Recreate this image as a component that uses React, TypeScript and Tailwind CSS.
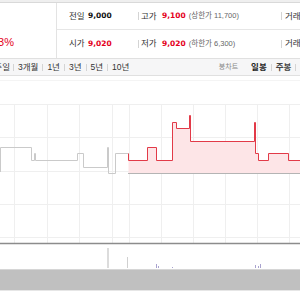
import React from 'react';

// Stock quote header + intraday chart (cropped view)

const FONT = "'Liberation Sans', 'Noto Sans CJK KR', sans-serif";
const NUM = "'DejaVu Sans', 'Noto Sans CJK KR', sans-serif";

const V_GRID = [14, 47, 79, 112, 129, 161, 193, 225, 257, 289];
const H_GRID = [104, 137, 171, 204, 237];

const GRAY_LINE =
  'M0.5,172 V147.5 H31.5 V160.5 H34.5 V153.5 H35.5 V160.5 H77.5 V153.5 H83.5 V167.5 H107.5 V147.5 H108.5 V173.5 H115.5 V153.5 H128.5';
const RED_LINE =
  'M128.5,153.5 V160.5 H147.5 V147.5 H156.5 V160.5 H172.5 V122.5 H176.5 V128.5 H189.5 V115.5 H190.5 V141.5 H254.5 V122.5 H255.5 V153.5 H258.5 V160.5 H268.5 V153.5 H288.5 V160.5 H300';

const VOLUME = [
  { x: 107, y: 248, w: 2, c: '#dcdcdc' },
  { x: 127, y: 257, w: 1, c: '#d0d0d0' },
  { x: 156, y: 264, w: 1, c: '#a9a3cf' },
  { x: 158, y: 266, w: 1, c: '#a9a3cf' },
  { x: 172, y: 267, w: 1, c: '#a9a3cf' },
  { x: 255, y: 265, w: 1, c: '#a9a3cf' },
  { x: 258, y: 266, w: 1, c: '#a9a3cf' },
  { x: 260, y: 264, w: 1, c: '#a9a3cf' },
];

function Sep({ h = 'h-[8px]' }: { h?: string }) {
  return <span className={`w-px ${h} bg-[#d4d4d4] shrink-0`} />;
}

function QuoteRow({
  l1, v1, red1, l2, v2, paren, l3, border,
}: {
  l1: string; v1: string; red1?: boolean; l2: string; v2: string; paren: string; l3: string; border?: boolean;
}) {
  return (
    <div className={`h-[27px] flex items-center pl-[12px] whitespace-nowrap ${border ? 'border-b border-[#e6e6e6]' : ''}`}>
      <div className="w-[69px] flex items-center shrink-0">
        <span className="w-[19px] text-[8.5px] text-[#333]">{l1}</span>
        <span className={`text-[7.5px] font-bold ${red1 ? 'text-[#e4001b]' : 'text-[#111]'}`} style={{ fontFamily: NUM }}>{v1}</span>
      </div>
      <Sep />
      <div className="w-[142px] flex items-center shrink-0 pl-[2px]">
        <span className="w-[21px] text-[8.5px] text-[#333]">{l2}</span>
        <span className="text-[7.5px] font-bold text-[#e4001b]" style={{ fontFamily: NUM }}>{v2}</span>
        <span className="ml-[3px] text-[7.5px] text-[#666]">{paren}</span>
      </div>
      <Sep />
      <span className="ml-[3px] text-[8.5px] text-[#333]">{l3}</span>
    </div>
  );
}

export default function App() {
  return (
    <div className="w-[300px] h-[300px] overflow-hidden bg-white" style={{ fontFamily: FONT }}>
      {/* top strip */}
      <div className="h-[3px] bg-[#efefef] border-b border-[#d9d9d9]" />

      {/* quote info */}
      <div className="h-[55px] flex">
        <div className="w-[57px] border-r border-[#e3e3e3] pt-[34px] shrink-0">
          <div className="w-[14px] flex justify-end overflow-hidden">
            <span className="shrink-0 whitespace-nowrap text-[11px] leading-[11px] text-[#e4001b]">0.33%</span>
          </div>
        </div>
        <div className="flex-1 min-w-0">
          <QuoteRow l1="전일" v1="9,000" l2="고가" v2="9,100" paren="(상한가 11,700)" l3="거래량" border />
          <QuoteRow l1="시가" v1="9,020" red1 l2="저가" v2="9,020" paren="(하한가 6,300)" l3="거래대금" />
        </div>
      </div>

      {/* period toolbar */}
      <div className="h-[18px] bg-[#f6f6f7] border-t border-b border-[#e0e0e0] flex items-center text-[8.5px] text-[#333] whitespace-nowrap">
        <div className="w-[10px] flex justify-end overflow-hidden shrink-0">
          <span className="shrink-0">1주일</span>
        </div>
        <div className="flex items-center gap-[4px] ml-[3px]">
          <Sep h="h-[7px]" />
          <span>3개월</span>
          <Sep h="h-[7px]" />
          <span>1년</span>
          <Sep h="h-[7px]" />
          <span>3년</span>
          <Sep h="h-[7px]" />
          <span>5년</span>
          <Sep h="h-[7px]" />
          <span>10년</span>
        </div>
        <div className="ml-auto -mr-[16px] flex items-center gap-[4px]">
          <span className="text-[7px] text-[#888] mr-[9px]">봉차트</span>
          <span className="font-bold text-[#222]">일봉</span>
          <Sep h="h-[7px]" />
          <span className="font-bold text-[#444]">주봉</span>
          <Sep h="h-[7px]" />
          <span className="font-bold text-[#444]">월봉</span>
        </div>
      </div>

      {/* chart */}
      <svg width="300" height="193" viewBox="0 76 300 193" className="block">
        <line x1="0" y1="80.5" x2="300" y2="80.5" stroke="#f4f4f4" />
        {H_GRID.map(y => (
          <line key={y} x1="0" y1={y + 0.5} x2="300" y2={y + 0.5} stroke="#efefef" />
        ))}
        {V_GRID.map(x => (
          <line key={x} x1={x + 0.5} y1="104" x2={x + 0.5} y2="243" stroke="#efefef" />
        ))}
        <path d={RED_LINE + ' V173.5 H128.5 Z'} fill="#fde5e7" />
        <line x1="128" y1="173.5" x2="300" y2="173.5" stroke="#b4b4b4" />
        <path d={GRAY_LINE} fill="none" stroke="#cacaca" />
        <path d={RED_LINE} fill="none" stroke="#e23a48" />
        <line x1="0" y1="243.5" x2="300" y2="243.5" stroke="#8c8c8c" strokeWidth="1.3" />
        {VOLUME.map((b, i) => (
          <rect key={i} x={b.x} y={b.y} width={b.w} height={268 - b.y} fill={b.c} />
        ))}
      </svg>

      {/* navigator strip */}
      <div className="h-[21px] bg-[#c0c0c0] border-t border-[#d6d6d6]" />
      <div className="h-[2px] border-t border-[#e6e6e6]" />
    </div>
  );
}
